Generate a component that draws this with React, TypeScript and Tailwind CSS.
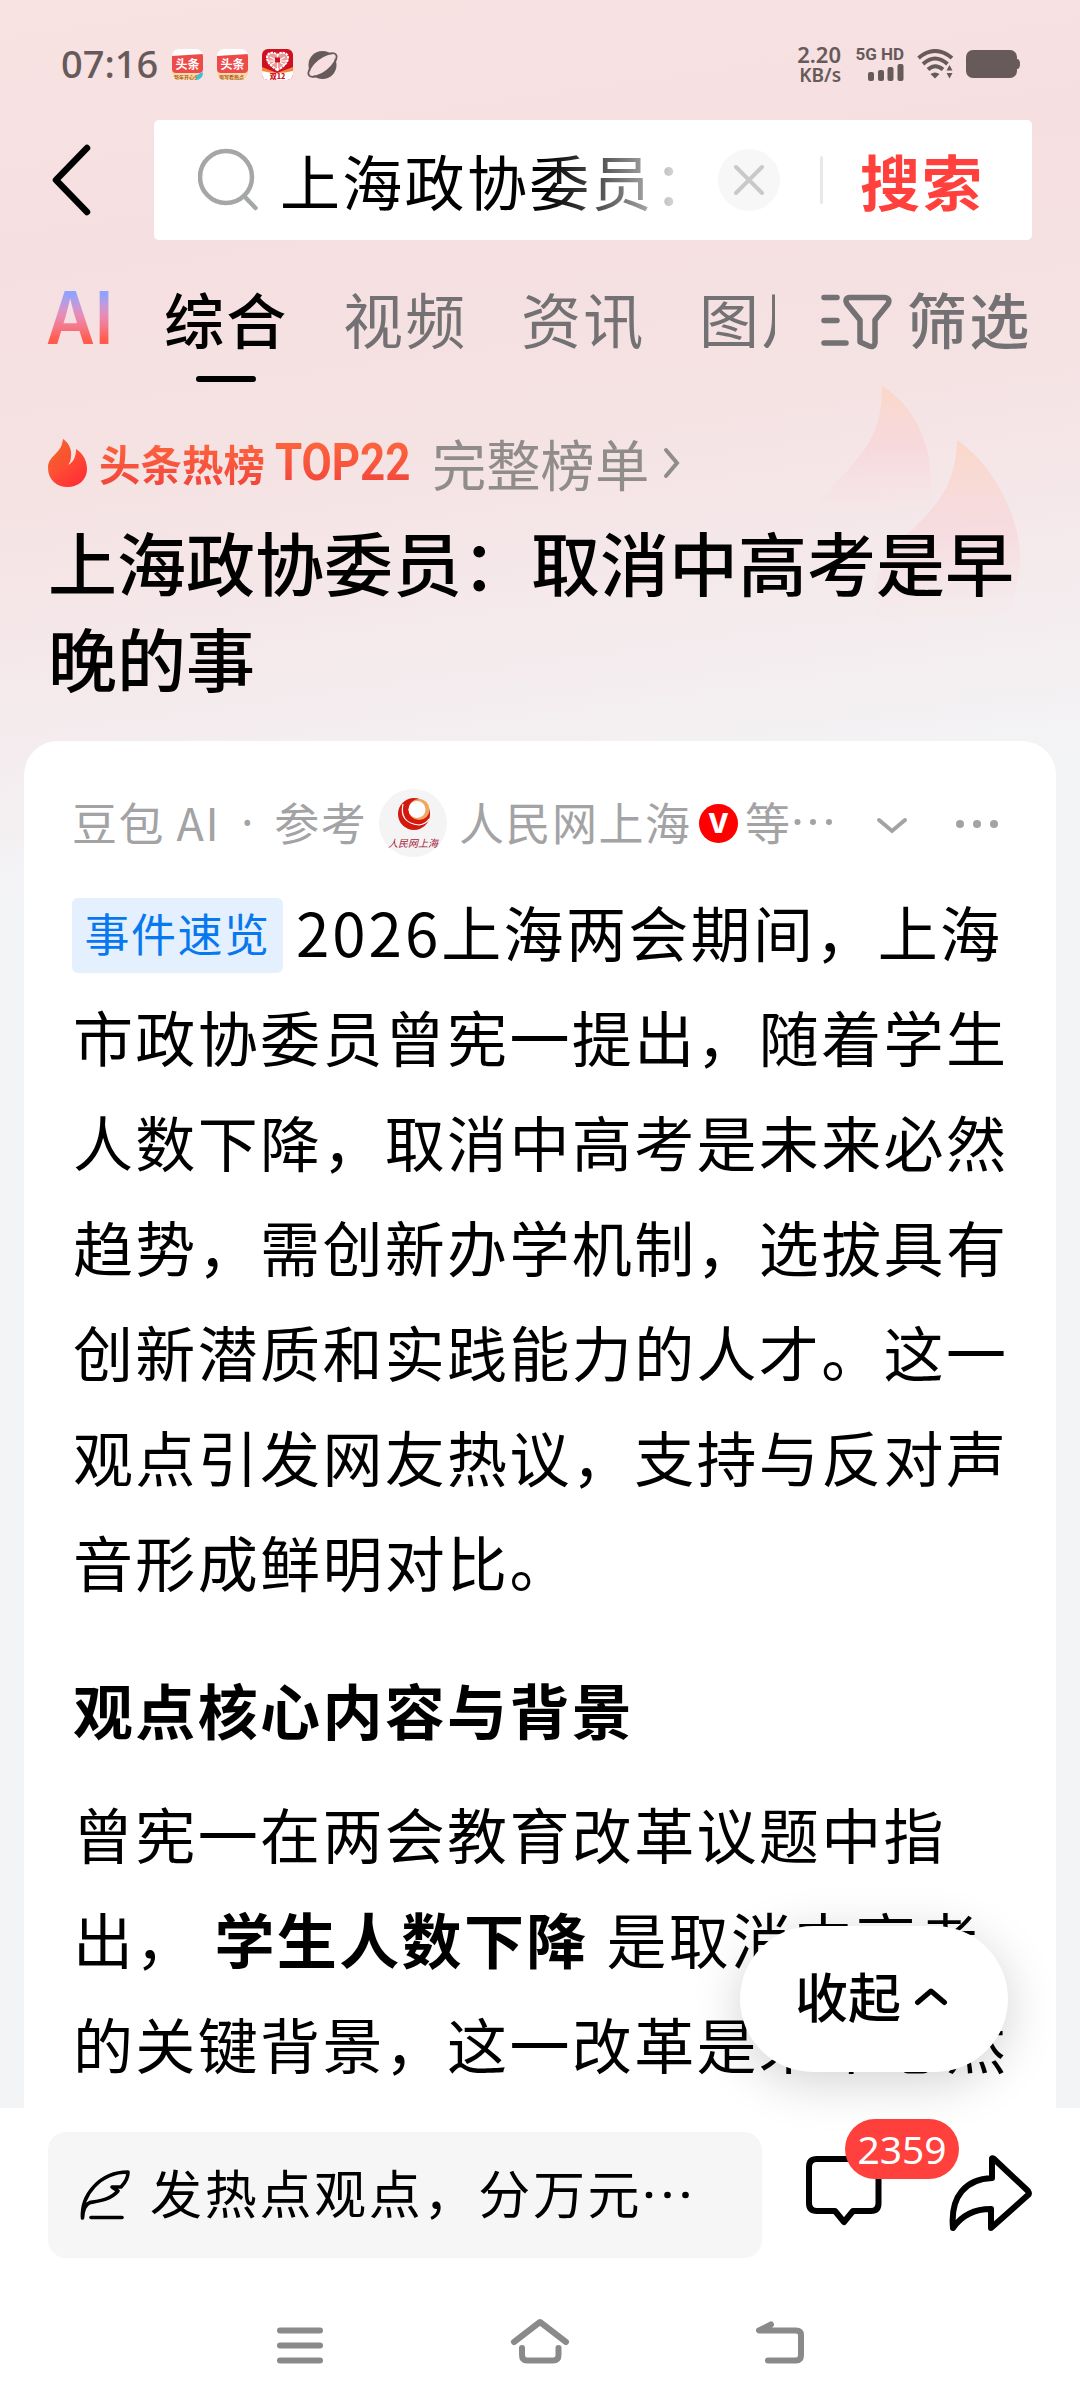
import React from "react";

const summaryLines = [
  "市政协委员曾宪一提出，随着学生",
  "人数下降，取消中高考是未来必然",
  "趋势，需创新办学机制，选拔具有",
  "创新潜质和实践能力的人才。这一",
  "观点引发网友热议，支持与反对声",
  "音形成鲜明对比。",
];

const NewsAppIcon: React.FC<{ label: string; leaf?: boolean }> = ({ label, leaf }) => (
  <svg width="31" height="31" viewBox="0 0 31 31" className="shrink-0 overflow-hidden rounded-[7px]">
    <rect width="31" height="31" fill="#fff" />
    <rect y="20" width="31" height="11" fill="#fbd9a6" />
    <path d="M0 7 L31 5 V20 Q31 24 27 24 H4 Q0 24 0 20 Z" fill="#ee4a4a" />
    <text x="15.500" y="20" fontSize="12" fontWeight="700" fill="#fff" textAnchor="middle">
      头条
    </text>
    <text x="14.500" y="29.500" fontSize="5" fontWeight="700" fill="#a85a1c" textAnchor="middle">
      {label}
    </text>
    {leaf && <path d="M24 31 Q24 24 31 23.500 V28 Q29 31 24 31 Z" fill="#35c3dc" />}
  </svg>
);

const StatusBar: React.FC = () => (
  <div className="flex h-[120px] shrink-0 items-center pt-[8px] pl-[61px] pr-[60px] text-[#665a5a]">
    <span className="-mt-[2px] w-[111px] font-['Noto_Sans'] text-[38px] leading-[40px] font-medium">07:16</span>
    <div className="flex items-center gap-[14px]">
      <NewsAppIcon label="新年开心头" leaf />
      <NewsAppIcon label="周写看热点" />
      <svg width="31" height="31" viewBox="0 0 31 31" className="shrink-0 overflow-hidden rounded-[6px]">
        <rect width="31" height="31" fill="#cf1020" />
        <path d="M0 18 L15 24 L31 18 V24 H0 Z" fill="#f08a3c" />
        <path d="M0 22 Q15 26 31 22 V31 H0 Z" fill="#fff" />
        <path
          d="M15.500 21 C10 18 5 14 5 8.500 C5 3.500 12 2 15.500 6 C19 2 26 3.500 26 8.500 C26 14 21 18 15.500 21 Z"
          fill="#ee9a9a"
          stroke="#fff"
          strokeWidth="2"
          strokeDasharray="2.500 0.800"
        />
        <path d="M8 8 L23 16 M23 8 L8 16 M15.500 6 V21 M6 12 H25" stroke="#fff" strokeWidth="1.100" />
        <rect x="13" y="8.500" width="5" height="5" fill="#cf1020" />
        <text x="15.500" y="29.500" fontSize="7" fontWeight="900" fill="#cf1020" textAnchor="middle">
          双12
        </text>
      </svg>
      <svg width="31" height="31" viewBox="0 0 31 31" className="overflow-visible">
        <ellipse cx="15.500" cy="16" rx="17" ry="7" transform="rotate(-38 15.500 16)" fill="#f7dfe0" stroke="#665a5a" strokeWidth="1.800" />
        <circle cx="15.500" cy="16" r="14" fill="#665a5a" />
        <ellipse cx="15.500" cy="16" rx="15" ry="6.200" transform="rotate(-38 15.500 16)" fill="#f7dfe0" />
      </svg>
    </div>

    <div className="ml-auto flex items-center">
      <div className="mr-px flex h-[42px] w-[46px] flex-col items-end justify-between font-['Noto_Sans'] font-semibold">
        <span className="text-[22px] leading-[22px]">2.20</span>
        <span className="text-[19px] leading-[20px]">KB/s</span>
      </div>
      <div className="ml-[12px] flex w-[50px] flex-col items-end">
        <span className="whitespace-nowrap font-['Roboto'] text-[17px] leading-[14px] font-bold">5G HD</span>
        <svg width="36" height="17" viewBox="0 0 36 17" fill="currentColor" className="mt-[3px]">
          <rect x="0" y="8" width="6" height="9" rx="2" />
          <rect x="10" y="6" width="6" height="11" rx="2" />
          <rect x="19.500" y="3" width="6" height="14" rx="2" />
          <rect x="29.500" y="0" width="6" height="17" rx="2" />
        </svg>
      </div>
      <svg width="37" height="30" viewBox="0 0 37 30" fill="none" stroke="currentColor" className="ml-[13px]">
        <path d="M1.500 9 Q18 -5 35 9" strokeWidth="4" />
        <path d="M6 15 Q18 4 30.500 15" strokeWidth="4" />
        <path d="M11 20.500 Q18 14 26 20.500" strokeWidth="4" />
        <path d="M13.500 25 Q18 22 22.500 25 L18 29.500 Z" fill="currentColor" stroke="none" />
        <path d="M29.500 21.500 L32.500 16 L35.500 21.500 Z M29.500 24 L32.500 29.500 L35.500 24 Z" fill="currentColor" stroke="none" />
      </svg>
      <svg width="54" height="28" viewBox="0 0 54 28" fill="currentColor" className="ml-[12px]">
        <rect width="51" height="28" rx="7" />
        <path d="M51 9 Q54 9 54 14 Q54 19 51 19 Z" />
      </svg>
    </div>
  </div>
);

const SearchRow: React.FC = () => (
  <div className="flex h-[120px] shrink-0 items-center pl-[50px] pr-[48px]">
    <svg width="42" height="76" viewBox="0 0 42 76" fill="none" stroke="#000" strokeWidth="6.500" strokeLinecap="round" strokeLinejoin="round">
      <path d="M37 6 L6 38 L37 70" />
    </svg>
    <div className="ml-[62px] flex h-[120px] flex-1 items-center rounded-[5px] bg-white pl-[44px]">
      <svg width="64" height="68" viewBox="0 0 64 68" fill="none" stroke="#a5a6a8" strokeWidth="4.500" strokeLinecap="round" className="shrink-0">
        <circle cx="28" cy="31" r="26" />
        <path d="M46 50 L57.500 62" />
      </svg>
      <div className="ml-[18px] w-[408px] overflow-hidden whitespace-nowrap bg-linear-to-r from-black from-60% to-[#d8d8d8] to-97% bg-clip-text text-[60px] leading-[92px] tracking-[2.300px] text-transparent">
        上海政协委员：
      </div>
      <div className="ml-[30px] flex size-[62px] shrink-0 items-center justify-center rounded-full bg-[#f7f7f7]">
        <svg width="32" height="32" viewBox="0 0 32 32" stroke="#c9c9c9" strokeWidth="4" strokeLinecap="round">
          <path d="M3 3 L29 29 M29 3 L3 29" />
        </svg>
      </div>
      <div className="ml-[40px] h-[48px] w-[3px] shrink-0 rounded bg-[#e8e8e8]" />
      <span className="ml-[37px] whitespace-nowrap text-[60px] leading-[92px] font-bold tracking-[2px] text-[#ff403c]">搜索</span>
    </div>
  </div>
);

const Tabs: React.FC = () => (
  <div className="mt-[48px] flex h-[94px] shrink-0 items-start pl-[46px] text-[60px] leading-[60px] tracking-[2.300px] text-[#737173]">
    <span className="w-[118px] shrink-0">
      <span className="inline-block origin-left scale-x-[0.920] bg-linear-to-b from-[#8fa2ff] from-10% via-[#e88cb8] via-45% to-[#ff5c4d] to-85% bg-clip-text font-['Inter'] text-[73px] font-semibold tracking-[0px] text-transparent">
        AI
      </span>
    </span>
    <div className="flex w-[179px] shrink-0 flex-col text-black">
      <span className="font-medium">综合</span>
      <div className="mt-[28px] ml-[32px] h-[6px] w-[60px] rounded-full bg-black" />
    </div>
    <span className="w-[178px] shrink-0">视频</span>
    <span className="w-[178px] shrink-0">资讯</span>
    <span className="w-[76px] shrink-0 overflow-hidden whitespace-nowrap">图片</span>
    <svg width="72" height="60" viewBox="0 0 72 60" fill="none" stroke="currentColor" strokeWidth="5.500" strokeLinecap="round" strokeLinejoin="round" className="ml-[46px] mt-[4px] shrink-0">
      <path d="M3 5.500 H16 M3 28.500 H16 M3 51 H25" />
      <path d="M29 5.500 H63 Q70 6 67 12 L54 28 V51 Q53 56 48 54 L39 50 V28 L26 12 Q23 6 29 5.500 Z" />
    </svg>
    <span className="ml-[14px] whitespace-nowrap font-medium">筛选</span>
  </div>
);

const HotHeader: React.FC = () => (
  <div className="relative h-[359px] shrink-0 pl-[48px]">
    {/* faded flames behind the title */}
    <svg width="240" height="270" viewBox="0 0 240 270" className="absolute left-[800px] top-0">
      <defs>
        <linearGradient id="fade" x1="0" y1="0" x2="0" y2="1">
          <stop offset="0" stopColor="#ffcba8" stopOpacity="0.500" />
          <stop offset="0.300" stopColor="#fdc8c0" stopOpacity="0.380" />
          <stop offset="0.500" stopColor="#fac0ca" stopOpacity="0.320" />
          <stop offset="1" stopColor="#fad3d8" stopOpacity="0" />
        </linearGradient>
      </defs>
      <path d="M82 4 C112 22 131 58 131 100 L130 132 H12 C46 80 82 72 82 4 Z" fill="url(#fade)" />
      <path d="M157 58 C192 82 218 130 220 172 C220 205 212 222 198 242 H80 C60 215 85 170 115 145 C140 120 156 100 157 58 Z" fill="url(#fade)" />
    </svg>

    <div className="relative flex h-[131px] items-start pt-[51px]">
      <div className="flex h-[60px] items-center">
        <svg width="40" height="50" viewBox="0 0 40 50" className="shrink-0">
          <defs>
            <linearGradient id="flame" x1="0" y1="0" x2="0.700" y2="1">
              <stop offset="0" stopColor="#ff7a35" />
              <stop offset="0.700" stopColor="#ff4234" />
              <stop offset="1" stopColor="#ff2f35" />
            </linearGradient>
          </defs>
          <path d="M15 1 C22 6 25 14 22 24 L20 27 C26 24 28 18 28 11 C36 16 39 24 39 31 C39 42 30 49 19.500 49 C9 49 0 42 0 30 C0 17 14 16 15 1 Z" fill="url(#flame)" />
          <path d="M15 1 C22 6 25 14 22 22 C18 29 8 31 0.500 28 C2 18 14 16 15 1 Z" fill="#f0542c" opacity="0.550" />
        </svg>
        <span className="ml-[11px] w-[176px] whitespace-nowrap bg-linear-to-b from-[#ff6a3d] to-[#f03f3c] bg-clip-text text-[41.500px] leading-[60px] font-bold text-transparent">
          头条热榜
        </span>
        <span className="w-[158px] origin-left scale-x-[0.860] whitespace-nowrap bg-linear-to-b from-[#ff6a3d] to-[#f03f3c] bg-clip-text font-['Roboto'] text-[51px] leading-[60px] font-bold text-transparent">
          TOP22
        </span>
        <span className="-ml-px whitespace-nowrap text-[54.300px] leading-[60px] text-[#918c8c]">完整榜单</span>
        <svg width="18" height="32" viewBox="0 0 18 32" fill="none" stroke="#918c8c" strokeWidth="4" strokeLinecap="round" className="ml-[14px]">
          <path d="M3 3 L14 16 L3 29" />
        </svg>
      </div>
    </div>

    <h1 className="relative whitespace-nowrap text-[69px] leading-[96px] font-medium text-black">
      <span className="block">上海政协委员：取消中高考是早</span>
      <span className="block">晚的事</span>
    </h1>
  </div>
);

const SourceRow: React.FC = () => (
  <div className="flex h-[68px] items-center whitespace-nowrap text-[45px] leading-[62px] tracking-[1.500px] text-[#a3a3a5]">
    <div className="-mt-[2px] flex w-[307px] items-center">
      <span>豆包 AI</span>
      <span className="w-[54px] pl-[2px] text-center font-['Noto_Sans']">·</span>
      <span>参考</span>
    </div>
    <svg width="68" height="68" viewBox="0 0 68 68" className="shrink-0">
      <circle cx="34" cy="34" r="34" fill="#f4f4f5" />
      <circle cx="35" cy="25" r="16" fill="#d3180f" />
      <circle cx="40" cy="20.500" r="10.500" fill="#f0a860" />
      <circle cx="38" cy="20.500" r="8.500" fill="#fff" />
      <path d="M24 15 Q20 34 40 36 Q47 35 50 30" fill="none" stroke="#fff" strokeWidth="1.200" />
      <text x="34" y="58" fontSize="10" fill="#a82040" textAnchor="middle" letterSpacing="0" fontStyle="italic">
        人民网上海
      </text>
    </svg>
    <span className="-mt-[2px] ml-[12px] w-[240px]">人民网上海</span>
    <div className="flex size-[39px] shrink-0 items-center justify-center rounded-full bg-[#fe0000] font-['Inter'] text-[27px] leading-[39px] font-extrabold tracking-normal text-white">
      V
    </div>
    <span className="-mt-[2px] ml-[7px] w-[44px]">等</span>
    <svg width="44" height="12" viewBox="0 0 44 12" fill="currentColor" className="shrink-0">
      <circle cx="8.500" cy="5" r="3" />
      <circle cx="24" cy="5" r="3" />
      <circle cx="40" cy="5" r="3" />
    </svg>
    <svg width="32" height="18" viewBox="0 0 32 18" fill="none" stroke="currentColor" strokeWidth="4" strokeLinecap="round" className="ml-[43px] mt-[5px] shrink-0">
      <path d="M3 3 L16 14 L29 3" />
    </svg>
    <svg width="44" height="10" viewBox="0 0 44 10" fill="currentColor" className="ml-[47px] mt-px shrink-0">
      <circle cx="5" cy="5" r="4" />
      <circle cx="22" cy="5" r="4" />
      <circle cx="39" cy="5" r="4" />
    </svg>
  </div>
);

const AnswerCard: React.FC = () => (
  <div className="relative mx-6 h-[1367px] shrink-0 overflow-hidden rounded-t-[34px] bg-white px-12 pt-12 text-black">
    <SourceRow />
    <div className="mt-[21px] whitespace-nowrap pl-px text-[60px] leading-[105px] tracking-[2.350px]">
      <div className="flex h-[105px] items-center">
        <span className="-ml-px mt-[9px] flex h-[75px] w-[211px] shrink-0 items-center justify-center rounded-[6px] bg-[#e4f0fe] pb-[4px] text-[45px] leading-[62px] tracking-[1.500px] text-[#0878f0]">
          事件速览
        </span>
        <span className="ml-[13px]">
          <span className="tracking-[3px]">2026</span>上海两会期间，上海
        </span>
      </div>
      {summaryLines.map((line) => (
        <span key={line} className="block">
          {line}
        </span>
      ))}
    </div>
    <h2 className="mt-[43px] whitespace-nowrap pl-px text-[60px] leading-[105px] font-bold tracking-[2.350px]">
      观点核心内容与背景
    </h2>
    <div className="mt-[19px] whitespace-nowrap pl-px text-[60px] leading-[105px] tracking-[2.350px]">
      <span className="block">曾宪一在两会教育改革议题中指</span>
      <span className="block">
        出， <b className="ml-px font-bold">学生人数下降</b> <span className="ml-[2px]">是取消中高考</span>
      </span>
      <span className="block">的关键背景，这一改革是未来必然</span>
    </div>
  </div>
);

const BottomBar: React.FC = () => (
  <div className="h-[300px] shrink-0 bg-white">
    <div className="flex items-start pt-6 pl-12">
      <div className="flex h-[126px] w-[714px] shrink-0 items-center rounded-[18px] bg-[#f6f6f6] pl-[31px]">
        <svg width="52" height="52" viewBox="0 0 52 52" fill="none" stroke="#000" strokeWidth="3.600" strokeLinecap="round" strokeLinejoin="round" className="shrink-0">
          <path d="M3.500 49 C2 26 21 3 49 3 C49 9 46 14 42 18 L33 18 L39 22 C31 31 20 32 11 33.500 C7 35 4 41 3.500 49" />
          <path d="M12 48.500 H43" />
        </svg>
        <span className="ml-[19px] -mt-[6px] whitespace-nowrap text-[52px] leading-[70px] tracking-[2.700px] text-black">
          发热点观点，分万元
        </span>
        <svg width="50" height="10" viewBox="0 0 50 10" className="shrink-0">
          <circle cx="7" cy="5" r="3.300" />
          <circle cx="25.500" cy="5" r="3.300" />
          <circle cx="43.500" cy="5" r="3.300" />
        </svg>
      </div>
      <div className="relative mt-[23px] ml-[43px] h-[76px] w-[80px] shrink-0">
        <svg width="80" height="76" viewBox="0 0 80 76" fill="none" stroke="#000" strokeWidth="6" strokeLinecap="round" strokeLinejoin="round">
          <path d="M12 4 H66 Q73.500 4 73.500 12 V48 Q73.500 56 66 56 H48 L39 67 L30 56 H12 Q4 56 4 48 V12 Q4 4 12 4 Z" />
        </svg>
        <div className="absolute left-[40px] -top-[36px] flex h-[60px] w-[114px] items-center justify-center rounded-full bg-[#ff403c] pb-[2px] font-['Noto_Sans'] text-[39px] leading-[59px] text-white">
          2359
        </div>
      </div>
      <svg width="86" height="80" viewBox="0 0 86 80" fill="none" stroke="#000" strokeWidth="6" strokeLinecap="round" strokeLinejoin="round" className="mt-[22px] ml-[63px] shrink-0">
        <path d="M44 5 V24 C18 25 2 42 5 74 C14 61 26 55 43 55 V74 L80 41 Q82 39.500 80 37 L46 5 Q44 3.500 44 5 Z" />
      </svg>
    </div>

    {/* system navigation */}
    <div className="mt-[54px] flex items-center gap-[182px] pl-[274px]">
      <svg width="52" height="54" viewBox="0 0 52 54" stroke="#8a8a8a" strokeWidth="6" strokeLinecap="round">
        <path d="M6 18.500 H46 M6 33.500 H46 M6 48.500 H46" />
      </svg>
      <svg width="64" height="54" viewBox="0 0 64 54" fill="none" stroke="#8a8a8a" strokeWidth="6" strokeLinecap="round" strokeLinejoin="round">
        <path d="M6 30 L32 10 L58 30" />
        <path d="M14 36 V43 Q14 48.500 19 48.500 H45 Q50.500 48.500 50.500 43 V36" />
      </svg>
      <svg width="56" height="54" viewBox="0 0 56 54" fill="none" stroke="#8a8a8a" strokeWidth="6" strokeLinecap="round" strokeLinejoin="round">
        <path d="M17 12.500 L5 18.500 H42 Q47 18.500 47 23 V43 Q47 48.500 42 48.500 H14" />
      </svg>
    </div>
  </div>
);

const App: React.FC = () => {
  return (
    <div className="relative flex h-[2408px] w-[1080px] flex-col overflow-hidden bg-[#f3f4f6] bg-[linear-gradient(172deg,#f8e2e2_0px,#f6dfe0_260px,#f5e2e3_480px,#f5e6e8_600px,#f4ebed_720px,#f3f4f6_900px)] font-['Noto_Sans_CJK_SC',sans-serif]">
      <StatusBar />
      <SearchRow />
      <Tabs />
      <HotHeader />
      <AnswerCard />
      <BottomBar />

      {/* floating collapse button */}
      <div className="absolute left-[740px] top-[1926px] flex h-[146px] w-[268px] items-center rounded-full bg-white pb-[8px] pl-[55px] shadow-[0_10px_50px_rgba(0,0,0,0.180)]">
        <span className="whitespace-nowrap text-[53px] leading-[70px] font-medium text-black">收起</span>
        <svg width="34" height="20" viewBox="0 0 34 20" fill="none" stroke="#000" strokeWidth="5" strokeLinecap="round" strokeLinejoin="round" className="ml-[13px] mt-[4px]">
          <path d="M3.500 15.500 L17 4 L30.500 15.500" />
        </svg>
      </div>
    </div>
  );
};

export default App;
